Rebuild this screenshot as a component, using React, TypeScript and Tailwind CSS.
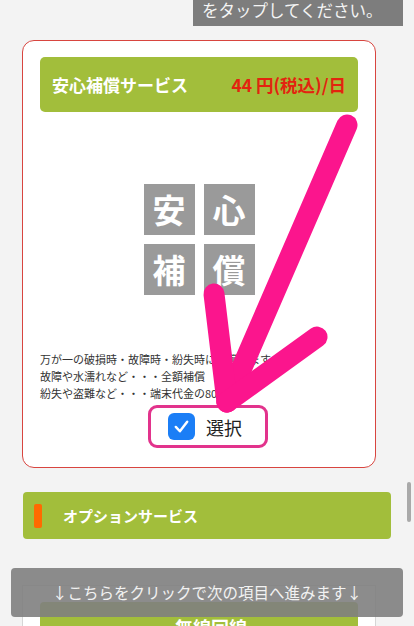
import React from "react";

export default function App() {
  return (
    <div className="relative w-[414px] h-[626px] overflow-hidden bg-[#f3f3f3] font-['Noto_Sans_CJK_JP','Noto_Sans',sans-serif]">
      {/* top hint box */}
      <div className="flex justify-end pr-[11px]">
        <div className="w-[210px] h-[26px] bg-[#7d7d7d] text-[#f4f4f4] text-[16.5px] leading-[21px] pl-[9px] whitespace-nowrap overflow-hidden">
          をタップしてください。
        </div>
      </div>

      {/* main card */}
      <div className="mt-[14px] ml-[22px] w-[354px] border border-[#d8453f] rounded-[12px] bg-white pt-[16px] px-[17px] pb-[19px]">
        <div className="h-[55px] rounded-[5px] bg-[#a2be3b] flex items-center justify-between pl-[12px] pr-[12px]">
          <span className="text-white font-bold text-[17px] leading-none">安心補償サービス</span>
          <span className="text-[#e3240f] font-bold text-[17.5px] leading-none">44 円(税込)/日</span>
        </div>

        <div className="mt-[72px] mx-auto w-fit grid grid-cols-2 gap-[9px]">
          {["安", "心", "補", "償"].map((c) => (
            <div
              key={c}
              className="w-[51px] h-[51px] bg-[#9a9a9a] flex items-center justify-center text-white font-bold text-[33px] leading-none"
            >
              {c}
            </div>
          ))}
        </div>

        <div className="mt-[56px] text-[11px] leading-[17px] text-[#333]">
          <p>万が一の破損時・故障時・紛失時に補償します。</p>
          <p>故障や水濡れなど・・・全額補償</p>
          <p>紛失や盗難など・・・端末代金の80%補償</p>
        </div>

        <div className="mt-[3px] ml-[108px] w-[120px] h-[43px] border-[3px] border-[#e2338c] rounded-[9px] flex items-center pl-[17px] gap-[11px]">
          <div className="w-[27px] h-[27px] rounded-[6px] bg-[#1b7ef6] flex items-center justify-center">
            <svg width="19" height="19" viewBox="0 0 20 20">
              <polyline
                points="4,10.5 8.3,15 16,5"
                fill="none"
                stroke="white"
                strokeWidth="2.6"
                strokeLinecap="round"
                strokeLinejoin="round"
              />
            </svg>
          </div>
          <span className="text-[18px] leading-none text-[#222]">選択</span>
        </div>
      </div>

      {/* options bar */}
      <div className="mt-[24px] ml-[23px] w-[368px] h-[47px] rounded-[4px] bg-[#a2be3b] flex items-center pl-[11px]">
        <div className="w-[8px] h-[24px] rounded-[2px] bg-[#ff6a00]" />
        <span className="ml-[21px] text-white font-bold text-[15px] leading-none">オプションサービス</span>
      </div>

      {/* next card */}
      <div className="mt-[46px] ml-[22px] w-[354px] h-[80px] border border-[#d6d6d6] bg-white pt-[16px] px-[17px]">
        <div className="h-[50px] rounded-[4px] bg-[#a2be3b] flex justify-center pt-[16px] pl-[24px]">
          <span className="text-white font-bold text-[18px] leading-none">無線回線</span>
        </div>
      </div>

      {/* overlay banner */}
      <div className="absolute left-[11px] top-[568px] w-[392px] h-[49px] rounded-[4px] bg-[rgba(128,128,128,0.9)] flex items-center justify-center">
        <span className="text-[#f2f2f2] text-[15.5px] leading-none whitespace-nowrap">↓こちらをクリックで次の項目へ進みます↓</span>
      </div>

      {/* scrollbar */}
      <div className="absolute left-[407px] top-[482px] w-[4px] h-[40px] rounded-full bg-[#a9a9a9]" />

      {/* pink arrow */}
      <svg className="absolute left-0 top-0 pointer-events-none" width="414" height="626" viewBox="0 0 414 626">
        <g stroke="#fb158d" strokeWidth="21" strokeLinecap="round" strokeLinejoin="round" fill="none">
          <line x1="347" y1="125" x2="227" y2="402" />
          <line x1="214" y1="294" x2="227" y2="402" />
          <line x1="317" y1="337" x2="227" y2="402" />
        </g>
      </svg>
    </div>
  );
}
